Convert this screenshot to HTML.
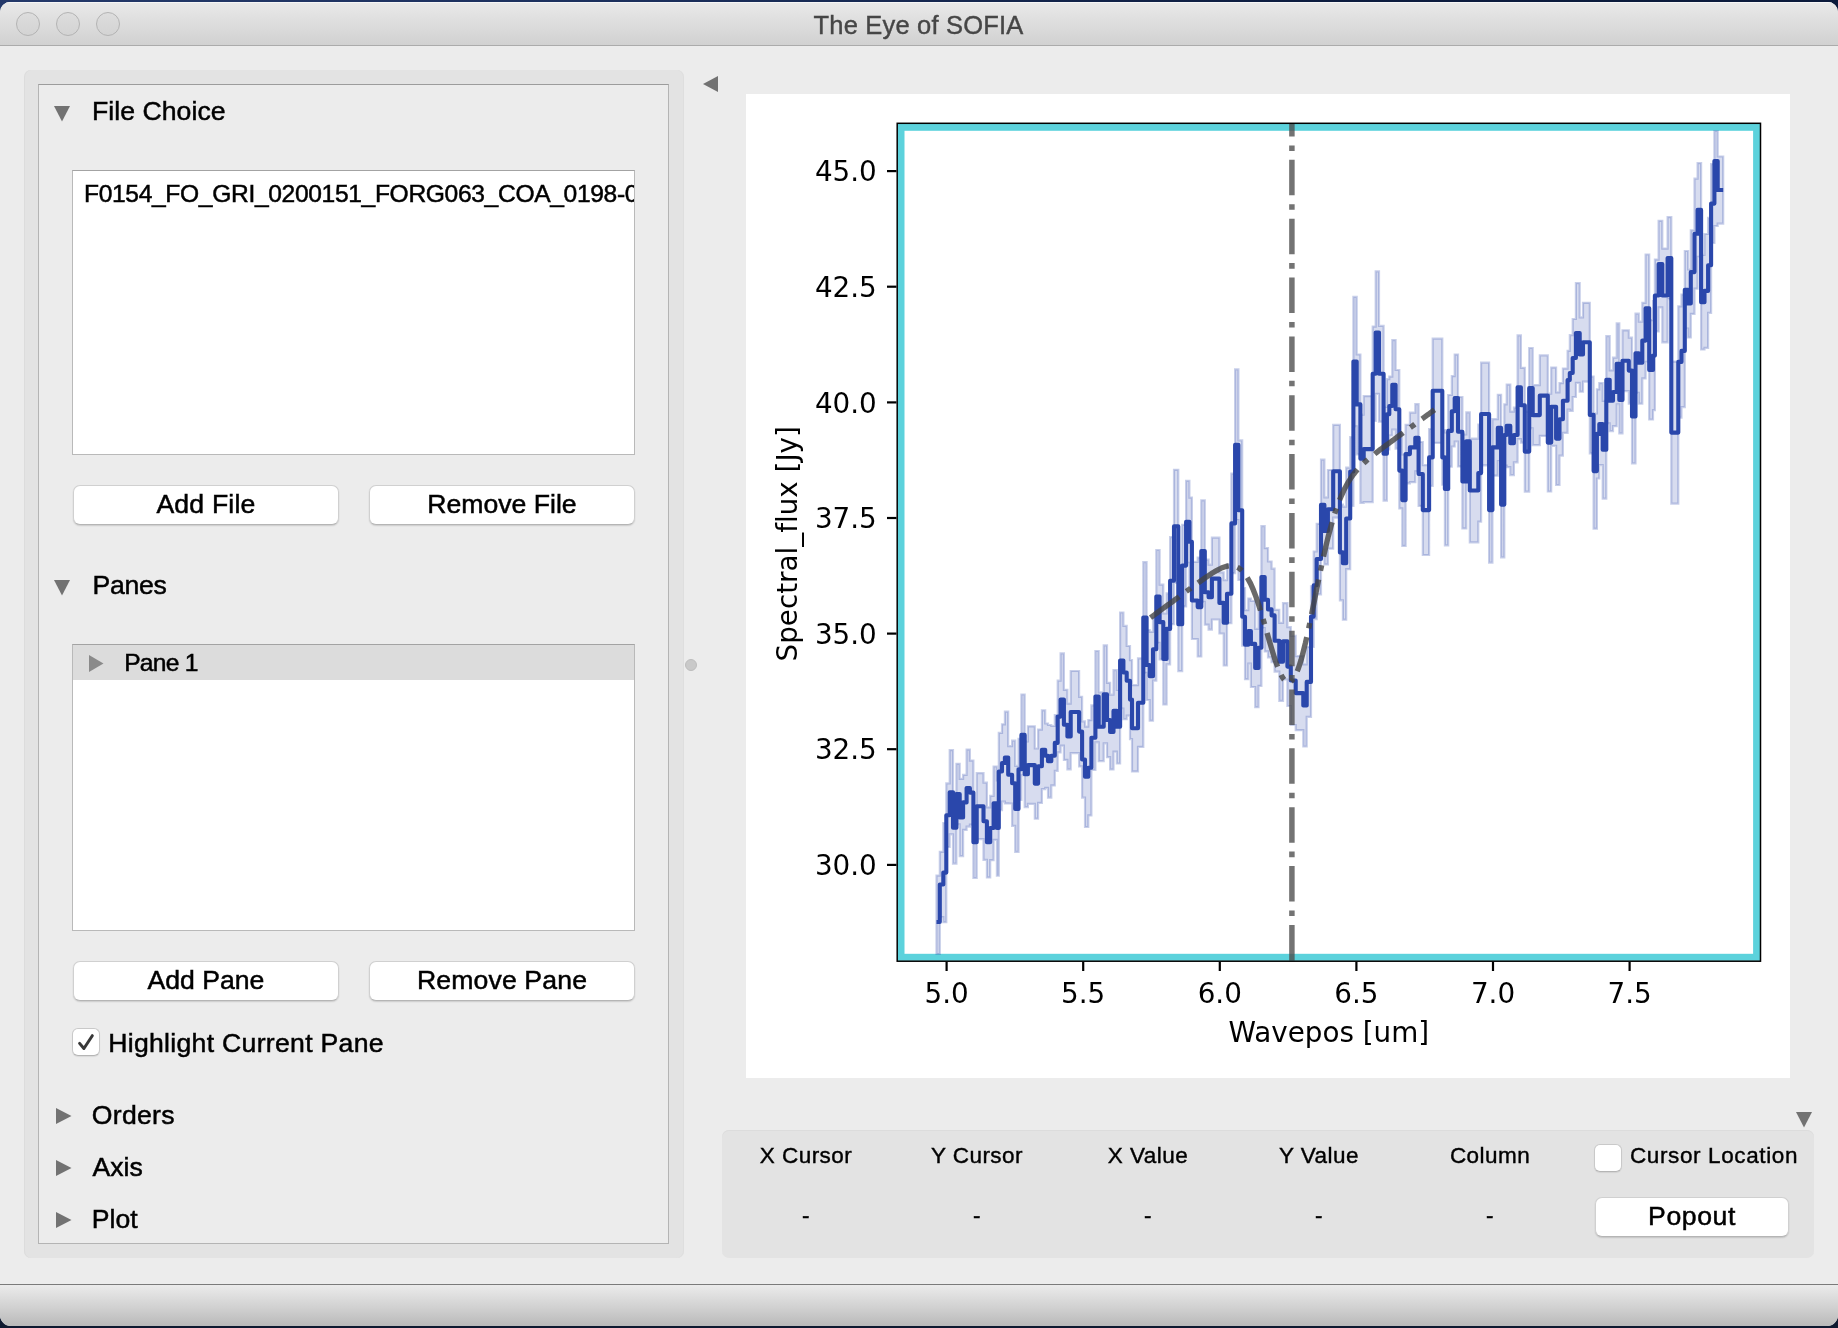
<!DOCTYPE html>
<html lang="en">
<head>
<meta charset="utf-8">
<title>The Eye of SOFIA</title>
<style>
html,body{margin:0;padding:0;}
body{width:1838px;height:1328px;overflow:hidden;position:relative;
  background:linear-gradient(90deg,#24396a 0%,#1b2f5c 35%,#0d1d40 70%,#0b1a3b 100%);
  font-family:"Liberation Sans",sans-serif;color:#000;}
.abs{position:absolute;}
#win{will-change:transform;position:absolute;left:0;top:2px;width:1838px;height:1324px;background:#ececec;border-radius:10px 10px 11px 11px;overflow:hidden;}
#botdark{position:absolute;left:0;top:1318px;width:1838px;height:10px;background:#0e1930;}
#titlebar{position:absolute;left:0;top:0;width:1838px;height:43px;background:linear-gradient(#e9e9e9,#d1d1d1);border-bottom:1px solid #ababab;box-shadow:inset 0 1px 0 #f6f6f6;}
#title{position:absolute;left:-0.5px;width:1838px;top:8px;text-align:center;font-size:25.5px;line-height:30px;color:#464646;letter-spacing:0.18px;-webkit-text-stroke:0.4px #464646;}
.tl{position:absolute;top:10px;width:22px;height:22px;border-radius:50%;background:linear-gradient(#dddddd,#d3d3d3);border:1px solid #b3b3b3;}
#status{position:absolute;left:0;top:1282px;width:1838px;height:42px;background:linear-gradient(#ebebeb,#d0d0d0 55%,#b8b8b8);border-top:1px solid #7a7a7a;}
#lgroup{position:absolute;left:24px;top:68px;width:660px;height:1188px;background:#e3e3e3;border-radius:7px;box-shadow:inset 1px 0 0 #dcdcdc, inset -1px 0 0 #dedede;}
#lframe{position:absolute;left:38px;top:82px;width:629px;height:1158px;background:#ececec;border:1px solid #b4b4b4;border-top-color:#9c9c9c;}
.t26{position:absolute;font-size:26.6px;line-height:30px;white-space:nowrap;-webkit-text-stroke:0.5px #000;}
.t22{position:absolute;font-size:22.5px;line-height:26px;white-space:nowrap;letter-spacing:0.45px;-webkit-text-stroke:0.4px #000;}
.list{position:absolute;background:#fff;border:1px solid #b9b9b9;border-top-color:#a3a3a3;overflow:hidden;}
.btn{position:absolute;background:#fff;border-radius:7px;border:1px solid #d0d0d0;border-bottom-color:#b5b5b5;box-shadow:0 1px 1.5px rgba(0,0,0,0.14);font-size:26.6px;text-align:center;box-sizing:border-box;white-space:nowrap;-webkit-text-stroke:0.5px #000;}
.cb{position:absolute;background:#fff;border-radius:6px;border:1px solid #c9c9c9;border-bottom-color:#b5b5b5;box-sizing:border-box;box-shadow:0 1px 1px rgba(0,0,0,0.08);}
svg.ico{position:absolute;overflow:visible;}
svg.plot{position:absolute;left:746px;top:92px;}
svg.plot text{font-family:"DejaVu Sans",sans-serif;font-size:27.8px;fill:#000;font-variant-ligatures:none;font-feature-settings:"liga" 0,"clig" 0;}
#bgroup{position:absolute;left:722px;top:1128px;width:1092px;height:128px;background:#e3e3e3;border-radius:7px;box-shadow:inset 0 1px 0 #dcdcdc;}
.c{text-align:center;}
</style>
</head>
<body>
<div id="botdark"></div>
<div id="win">
  <div id="titlebar">
    <div class="tl" style="left:16px"></div>
    <div class="tl" style="left:56px"></div>
    <div class="tl" style="left:96px"></div>
    <div id="title">The Eye of SOFIA</div>
  </div>

  <!-- left control panel -->
  <div id="lgroup"></div>
  <div id="lframe"></div>

  <svg class="ico" style="left:54px;top:104px" width="16" height="16"><path d="M0 0H16L8 15.5Z" fill="#727272"/></svg>
  <div class="t26" id="t_file" style="left:92px;top:94px;letter-spacing:0.05px">File Choice</div>

  <div class="list" style="left:72px;top:168px;width:561px;height:283px">
    <div class="t26" id="t_fname" style="left:11px;top:8px;font-size:24.6px;letter-spacing:-0.34px">F0154_FO_GRI_0200151_FORG063_COA_0198-0</div>
  </div>
  <div class="btn" id="b_addfile" style="letter-spacing:0.2px;left:73px;top:483px;width:266px;height:40px;line-height:37px">Add File</div>
  <div class="btn" id="b_rmfile" style="left:369px;top:483px;width:266px;height:40px;line-height:37px">Remove File</div>

  <svg class="ico" style="left:54px;top:578px" width="16" height="16"><path d="M0 0H16L8 15.5Z" fill="#727272"/></svg>
  <div class="t26" id="t_panes" style="left:92.5px;top:568px;letter-spacing:-0.3px">Panes</div>

  <div class="list" style="left:72px;top:642px;width:561px;height:285px">
    <div class="abs" style="left:0;top:0;width:561px;height:35px;background:#dcdcdc"></div>
    <svg class="ico" style="left:16px;top:9.5px" width="16" height="17"><path d="M0 0V17L14.5 8.5Z" fill="#8a8a8a"/></svg>
    <div class="t26" id="t_pane1" style="left:51.2px;top:3px;font-size:24.6px;letter-spacing:-0.75px">Pane 1</div>
  </div>
  <div class="btn" id="b_addpane" style="left:73px;top:959px;width:266px;height:40px;line-height:37px">Add Pane</div>
  <div class="btn" id="b_rmpane" style="letter-spacing:0.15px;left:369px;top:959px;width:266px;height:40px;line-height:37px">Remove Pane</div>

  <div class="cb" style="left:72px;top:1026px;width:28px;height:28px"></div>
  <svg class="ico" style="left:72px;top:1026px" width="28" height="28"><path d="M7.6 15.4L11.9 20.5L20.3 7.7" fill="none" stroke="#383838" stroke-width="3" stroke-linecap="round" stroke-linejoin="round"/></svg>
  <div class="t26" id="t_hl" style="left:108.2px;top:1026px;letter-spacing:0.3px">Highlight Current Pane</div>

  <svg class="ico" style="left:56px;top:1106px" width="16" height="17"><path d="M0 0V16L15.5 8Z" fill="#727272"/></svg>
  <div class="t26" id="t_orders" style="left:91.8px;top:1098px;letter-spacing:0.3px">Orders</div>
  <svg class="ico" style="left:56px;top:1158px" width="16" height="17"><path d="M0 0V16L15.5 8Z" fill="#727272"/></svg>
  <div class="t26" id="t_axis" style="left:92.5px;top:1149.5px">Axis</div>
  <svg class="ico" style="left:56px;top:1210px" width="16" height="17"><path d="M0 0V16L15.5 8Z" fill="#727272"/></svg>
  <div class="t26" id="t_plot" style="left:91.8px;top:1201.6px">Plot</div>

  <!-- splitter -->
  <div class="abs" style="left:685px;top:656.5px;width:12px;height:12px;border-radius:50%;background:#c9c9c9;border:1px solid #bdbdbd;box-sizing:border-box"></div>
  <svg class="ico" style="left:703px;top:74px" width="15" height="16"><path d="M15 0V16L0 8Z" fill="#727272"/></svg>

  <svg class="plot" width="1044" height="984" viewBox="746 94 1044 984">
<rect x="746" y="94" width="1044" height="984" fill="#fff"/>
<clipPath id="ax"><rect x="897" y="123.3" width="863.6" height="838"/></clipPath>
<rect x="901" y="127.3" width="855.6" height="830" fill="none" stroke="#5cd2dc" stroke-width="7"/>
<g clip-path="url(#ax)">
<path d="M936.5 875.6H939.8V851.8H943.3V823.0H946.3V783.4H949.7V750.1H953.0V791.8H956.4V763.8H959.7V778.8H963.1V774.9H966.6V749.6H969.9V760.6H973.4V806.6H976.7V773.2H983.5V782.7H986.9V807.3H990.2V795.9H993.6V766.5H996.9V780.3H998.8V732.9H1002.0V724.3H1004.9V711.7H1008.2V746.2H1012.1V740.7H1015.2V765.9H1018.5V738.8H1021.4V694.5H1024.7V741.4H1027.9V726.3H1034.8V748.5H1038.1V729.6H1041.9V710.3H1045.2V723.5H1048.0V725.0H1051.3V726.0H1054.8V715.1H1057.7V680.7H1060.6V653.4H1063.9V689.8H1067.4V703.6H1070.7V671.0H1079.1V696.8H1082.1V721.4H1085.0V726.6H1088.3V720.1H1091.4V705.4H1095.4V651.0H1098.7V692.4H1103.7V645.4H1107.0V682.8H1110.1V694.7H1113.5V670.2H1116.8V690.0H1120.1V612.5H1123.4V625.9H1126.7V646.0H1130.0V660.1H1132.0V685.1H1138.0V658.4H1143.3V562.2H1146.6V630.0H1149.7V631.8H1153.0V617.8H1156.3V550.0H1159.6V584.7H1163.3V613.5H1166.6V593.4H1170.1V537.2H1174.0V469.8H1178.3V577.6H1182.2V524.8H1186.1V480.8H1189.4V497.6H1191.9V561.9H1197.7V557.6H1201.3V500.3H1204.8V559.7H1208.6V564.7H1211.9V537.7H1219.4V572.4H1223.7V580.2H1227.0V564.5H1231.4V473.7H1235.1V369.4H1238.4V440.4H1242.2V588.0H1245.0V610.1H1248.3V598.6H1250.9V600.9H1255.2V628.8H1258.5V609.4H1261.4V526.2H1264.7V548.1H1268.0V561.5H1271.6V568.7H1274.6V609.8H1279.3V622.8H1283.0V603.2H1287.4V627.2H1290.8V635.9H1295.7V656.1H1303.3V664.3H1306.7V647.1H1311.0V586.4H1313.7V551.5H1316.7V523.8H1321.0V459.7H1324.4V497.4H1327.9V470.0H1333.2V424.9H1339.9V504.6H1342.9V506.7H1346.2V467.7H1350.2V437.2H1353.4V296.9H1356.7V354.5H1360.4V414.7H1363.7V396.1H1372.7V326.6H1375.7V271.4H1379.0V325.9H1383.6V406.9H1386.9V379.2H1389.3V376.6H1392.3V340.1H1395.6V370.0H1399.3V432.9H1402.3V454.4H1405.6V424.8H1409.9V412.7H1415.3V404.2H1418.6V442.0H1422.8V465.2H1429.1V429.0H1432.7V338.7H1442.3V430.0H1444.9V432.5H1448.2V395.0H1451.8V376.1H1454.7V354.6H1458.0V397.0H1462.4V434.4H1466.3V412.4H1469.8V438.7H1478.3V424.5H1481.1V362.7H1489.1V457.5H1492.4V419.2H1497.8V394.8H1501.1V451.9H1504.3V404.3H1506.7V384.6H1510.3V411.6H1513.9V407.7H1517.6V335.4H1520.9V367.8H1524.8V411.6H1529.2V348.0H1532.7V385.2H1539.8V355.4H1547.8V393.7H1551.2V367.6H1556.1V392.3H1559.5V383.1H1562.9V368.6H1567.6V350.8H1569.8V335.2H1572.7V319.0H1575.9V283.1H1579.7V317.4H1583.0V302.8H1589.8V376.6H1593.6V413.4H1596.9V389.3H1599.3V383.1H1602.7V400.8H1606.3V336.2H1609.7V370.3H1613.0V357.7H1616.7V323.4H1619.3V366.5H1622.5V330.3H1628.8V337.7H1632.0V369.7H1635.5V313.7H1638.8V321.7H1642.3V302.8H1645.6V254.5H1649.2V320.2H1653.0V301.0H1654.9V259.6H1658.6V220.8H1662.3V248.6H1667.6V217.1H1671.3V361.6H1678.3V306.3H1681.5V294.6H1684.8V251.0H1688.1V269.4H1690.8V230.3H1694.5V178.7H1697.6V163.1H1701.1V254.9H1704.5V234.0H1708.1V217.9H1711.1V164.2H1714.4V131.0H1717.7V156.5H1723.2V223.6H1717.7V226.0H1714.4V243.0H1711.1V312.8H1708.1V347.8H1704.5V349.5H1701.1V256.8H1697.6V288.7H1694.5V313.9H1690.8V337.5H1688.1V328.5H1684.8V407.1H1681.5V417.6H1678.3V503.6H1671.3V299.1H1667.6V342.3H1662.3V307.4H1658.6V331.4H1654.9V410.2H1653.0V419.5H1649.2V361.8H1645.6V378.4H1642.3V403.7H1638.8V392.8H1635.5V463.3H1632.0V403.6H1628.8V391.1H1622.5V433.3H1619.3V404.3H1616.7V426.2H1613.0V431.1H1609.7V423.4H1606.3V498.6H1602.7V465.1H1599.3V478.5H1596.9V528.7H1593.6V453.3H1589.8V381.6H1583.0V391.7H1579.7V382.9H1575.9V397.0H1572.7V410.8H1569.8V409.5H1567.6V432.8H1562.9V455.6H1559.5V485.0H1556.1V445.8H1551.2V491.5H1547.8V435.9H1539.8V445.1H1532.7V428.3H1529.2V491.6H1524.8V442.6H1520.9V439.2H1517.6V462.3H1513.9V475.1H1510.3V467.2H1506.7V465.7H1504.3V557.3H1501.1V461.0H1497.8V475.7H1492.4V562.6H1489.1V465.3H1481.1V521.7H1478.3V542.3H1469.8V469.9H1466.3V528.4H1462.4V466.4H1458.0V441.5H1454.7V446.5H1451.8V466.7H1448.2V545.3H1444.9V484.7H1442.3V442.9H1432.7V485.8H1429.1V555.0H1422.8V505.9H1418.6V471.4H1415.3V482.2H1409.9V483.3H1405.6V545.9H1402.3V508.4H1399.3V448.6H1395.6V429.6H1392.3V435.5H1389.3V449.4H1386.9V500.6H1383.6V421.6H1379.0V393.9H1375.7V420.8H1372.7V502.1H1363.7V502.8H1360.4V454.3H1356.7V426.4H1353.4V505.8H1350.2V569.2H1346.2V619.7H1342.9V600.3H1339.9V517.6H1333.2V548.7H1327.9V564.4H1324.4V549.7H1321.0V594.3H1316.7V619.1H1313.7V646.9H1311.0V716.8H1306.7V746.5H1303.3V730.2H1295.7V725.0H1290.8V706.0H1287.4V679.5H1283.0V700.8H1279.3V671.6H1274.6V662.1H1271.6V657.3H1268.0V651.4H1264.7V628.0H1261.4V685.9H1258.5V707.2H1255.2V687.0H1250.9V663.6H1248.3V679.2H1245.0V645.6H1242.2V579.9H1238.4V520.0H1235.1V573.2H1231.4V623.2H1227.0V665.5H1223.7V633.5H1219.4V619.5H1211.9V629.6H1208.6V624.7H1204.8V601.9H1201.3V656.5H1197.7V639.0H1191.9V585.7H1189.4V562.8H1186.1V606.4H1182.2V671.1H1178.3V582.8H1174.0V624.2H1170.1V664.3H1166.6V704.5H1163.3V659.4H1159.6V642.9H1156.3V680.6H1153.0V720.7H1149.7V700.0H1146.6V672.9H1143.3V746.9H1138.0V771.4H1132.0V739.1H1130.0V715.6H1126.7V719.2H1123.4V708.5H1120.1V763.5H1116.8V751.7H1113.5V769.4H1110.1V757.2H1107.0V743.3H1103.7V761.1H1098.7V742.3H1095.4V769.9H1091.4V815.4H1088.3V827.0H1085.0V797.6H1082.1V766.4H1079.1V753.1H1070.7V769.3H1067.4V759.9H1063.9V745.7H1060.6V752.4H1057.7V770.8H1054.8V785.4H1051.3V797.6H1048.0V787.9H1045.2V789.1H1041.9V802.9H1038.1V818.7H1034.8V803.8H1027.9V807.1H1024.7V775.4H1021.4V799.8H1018.5V851.8H1015.2V825.8H1012.1V803.5H1008.2V803.4H1004.9V801.6H1002.0V810.1H998.8V875.7H996.9V839.9H993.6V860.2H990.2V877.4H986.9V859.8H983.5V839.1H976.7V878.0H973.4V824.7H969.9V826.6H966.6V829.9H963.1V856.1H959.7V824.4H956.4V863.6H953.0V834.3H949.7V847.0H946.3V922.2H943.3V917.2H939.8V954.0H936.5Z" fill="rgba(42,71,171,0.19)" stroke="rgba(42,71,171,0.26)" stroke-width="2.2" stroke-linejoin="miter"/>
<path d="M936.5 922.0H939.8V884.5H943.3V872.6H946.3V815.2H949.7V792.2H953.0V827.7H956.4V794.1H959.7V817.5H963.1V802.4H966.6V788.1H969.9V792.6H973.4V842.3H976.7V806.2H983.5V821.2H986.9V842.3H990.2V828.0H993.6V803.2H996.9V828.0H998.8V771.5H1002.0V763.0H1004.9V757.5H1008.2V774.8H1012.1V783.3H1015.2V808.9H1018.5V769.3H1021.4V734.9H1024.7V774.2H1027.9V765.1H1034.8V783.6H1038.1V766.3H1041.9V749.7H1045.2V755.7H1048.0V761.3H1051.3V755.7H1054.8V742.9H1057.7V716.6H1060.6V699.5H1063.9V724.8H1067.4V736.4H1070.7V712.0H1079.1V731.6H1082.1V759.5H1085.0V776.8H1088.3V767.8H1091.4V737.7H1095.4V696.6H1098.7V726.7H1103.7V694.4H1107.0V720.0H1110.1V732.0H1113.5V710.9H1116.8V726.7H1120.1V660.5H1123.4V672.5H1126.7V680.8H1130.0V699.6H1132.0V728.3H1138.0V702.7H1143.3V617.6H1146.6V665.0H1149.7V676.3H1153.0V649.2H1156.3V596.5H1159.6V622.1H1163.3V659.0H1166.6V628.9H1170.1V580.7H1174.0V526.3H1178.3V624.3H1182.2V565.6H1186.1V521.8H1189.4V541.7H1191.9V600.5H1197.7V607.1H1201.3V551.1H1204.8V592.2H1208.6V597.2H1211.9V578.6H1219.4V602.9H1223.7V622.8H1227.0V593.8H1231.4V523.4H1235.1V444.7H1238.4V510.2H1242.2V616.8H1245.0V644.7H1248.3V631.1H1250.9V643.9H1255.2V668.0H1258.5V647.7H1261.4V577.1H1264.7V599.8H1268.0V609.4H1271.6V615.4H1274.6V640.7H1279.3V661.8H1283.0V641.3H1287.4V666.6H1290.8V680.5H1295.7V693.1H1303.3V705.4H1306.7V681.9H1311.0V616.6H1313.7V585.3H1316.7V559.0H1321.0V504.7H1324.4V530.9H1327.9V509.3H1333.2V471.2H1339.9V552.4H1342.9V563.2H1346.2V518.5H1350.2V471.5H1353.4V361.6H1356.7V404.4H1360.4V458.7H1363.7V449.1H1372.7V373.7H1375.7V332.6H1379.0V373.7H1383.6V453.7H1386.9V414.3H1389.3V406.0H1392.3V384.8H1395.6V409.3H1399.3V470.6H1402.3V500.1H1405.6V454.1H1409.9V447.4H1415.3V437.8H1418.6V474.0H1422.8V510.1H1429.1V457.4H1432.7V390.8H1442.3V457.4H1444.9V488.9H1448.2V430.9H1451.8V411.3H1454.7V398.1H1458.0V431.7H1462.4V481.4H1466.3V441.2H1469.8V490.5H1478.3V473.1H1481.1V414.0H1489.1V510.1H1492.4V447.4H1497.8V427.9H1501.1V504.6H1504.3V435.0H1506.7V425.9H1510.3V443.3H1513.9V435.0H1517.6V387.3H1520.9V405.2H1524.8V451.6H1529.2V388.1H1532.7V415.1H1539.8V395.6H1547.8V442.6H1551.2V406.7H1556.1V438.6H1559.5V419.3H1562.9V400.7H1567.6V380.1H1569.8V373.0H1572.7V358.0H1575.9V333.0H1579.7V354.5H1583.0V342.2H1589.8V414.9H1593.6V471.1H1596.9V433.9H1599.3V424.1H1602.7V449.7H1606.3V379.8H1609.7V400.7H1613.0V392.0H1616.7V363.8H1619.3V399.9H1622.5V360.7H1628.8V370.6H1632.0V416.5H1635.5V353.3H1638.8V362.7H1642.3V340.6H1645.6V308.2H1649.2V369.9H1653.0V355.6H1654.9V295.5H1658.6V264.1H1662.3V295.5H1667.6V258.1H1671.3V432.6H1678.3V361.9H1681.5V350.9H1684.8V289.7H1688.1V303.4H1690.8V272.1H1694.5V233.7H1697.6V209.9H1701.1V302.2H1704.5V290.9H1708.1V265.3H1711.1V203.6H1714.4V161.0H1717.7V190.0H1723.2" fill="none" stroke="#2a47ab" stroke-width="4.1" stroke-linejoin="round" stroke-linecap="butt"/>
<path d="M1150.5 617.6L1151.9 616.6L1153.3 615.6L1154.7 614.6L1156.1 613.5L1157.5 612.5L1158.9 611.5L1160.3 610.4L1161.7 609.4L1163.1 608.4L1164.5 607.4L1166.0 606.3L1167.4 605.3L1168.8 604.3L1170.2 603.2L1171.6 602.2L1173.0 601.2L1174.4 600.2L1175.8 599.1L1177.2 598.1L1178.6 597.1L1180.0 596.0L1181.4 595.0L1182.8 594.0L1184.2 593.0L1185.6 591.9L1187.0 590.9L1188.4 589.9L1189.8 588.9L1191.2 587.8L1192.7 586.8L1194.1 585.8L1195.5 584.8L1196.9 583.8L1198.3 582.8L1199.7 581.8L1201.1 580.8L1202.5 579.8L1203.9 578.8L1205.3 577.8L1206.7 576.8L1208.1 575.9L1209.5 574.9L1210.9 574.0L1212.3 573.1L1213.7 572.2L1215.1 571.4L1216.5 570.6L1217.9 569.8L1219.3 569.1L1220.8 568.4L1222.2 567.7L1223.6 567.2L1225.0 566.7L1226.4 566.3L1227.8 566.0L1229.2 565.8L1230.6 565.7L1232.0 565.7L1233.4 565.9L1234.8 566.2L1236.2 566.7L1237.6 567.4L1239.0 568.2L1240.4 569.3L1241.8 570.5L1243.2 572.0L1244.6 573.7L1246.0 575.7L1247.4 577.9L1248.8 580.4L1250.3 583.1L1251.7 586.1L1253.1 589.4L1254.5 592.9L1255.9 596.6L1257.3 600.6L1258.7 604.8L1260.1 609.1L1261.5 613.7L1262.9 618.4L1264.3 623.2L1265.7 628.1L1267.1 633.0L1268.5 637.9L1269.9 642.8L1271.3 647.6L1272.7 652.3L1274.1 656.8L1275.5 661.1L1277.0 665.1L1278.4 668.8L1279.8 672.1L1281.2 675.0L1282.6 677.5L1284.0 679.5L1285.4 681.0L1286.8 681.9L1288.2 682.3L1289.6 682.2L1291.0 681.4" fill="none" stroke="rgba(67,67,67,0.8)" stroke-width="5.4" stroke-dasharray="35.5 8.9 5.55 8.9"/>
<path d="M1291.0 681.4L1292.4 680.1L1293.9 678.1L1295.3 675.6L1296.7 672.4L1298.2 668.8L1299.6 664.6L1301.1 659.9L1302.5 654.7L1303.9 649.1L1305.4 643.2L1306.8 636.9L1308.2 630.4L1309.7 623.7L1311.1 616.7L1312.5 609.7L1314.0 602.6L1315.4 595.4L1316.8 588.3L1318.3 581.2L1319.7 574.3L1321.2 567.4L1322.6 560.7L1324.0 554.3L1325.5 548.0L1326.9 542.0L1328.3 536.2L1329.8 530.7L1331.2 525.4L1332.6 520.4L1334.1 515.7L1335.5 511.2L1337.0 507.0L1338.4 503.1L1339.8 499.4L1341.3 496.0L1342.7 492.8L1344.1 489.7L1345.6 486.9L1347.0 484.3L1348.4 481.9L1349.9 479.6L1351.3 477.4L1352.7 475.4L1354.2 473.5L1355.6 471.7L1357.1 470.0L1358.5 468.4L1359.9 466.9L1361.4 465.5L1362.8 464.1L1364.2 462.7L1365.7 461.4L1367.1 460.1L1368.5 458.9L1370.0 457.7L1371.4 456.5L1372.9 455.4L1374.3 454.3L1375.7 453.1L1377.2 452.0L1378.6 450.9L1380.0 449.8L1381.5 448.8L1382.9 447.7L1384.3 446.6L1385.8 445.5L1387.2 444.5L1388.6 443.4L1390.1 442.4L1391.5 441.3L1393.0 440.2L1394.4 439.2L1395.8 438.1L1397.3 437.1L1398.7 436.0L1400.1 435.0L1401.6 433.9L1403.0 432.9L1404.4 431.8L1405.9 430.8L1407.3 429.7L1408.8 428.7L1410.2 427.6L1411.6 426.6L1413.1 425.5L1414.5 424.5L1415.9 423.4L1417.4 422.4L1418.8 421.3L1420.2 420.3L1421.7 419.2L1423.1 418.2L1424.5 417.1L1426.0 416.1L1427.4 415.0L1428.9 414.0L1430.3 412.9L1431.7 411.9L1433.2 410.8L1434.6 409.8" fill="none" stroke="rgba(67,67,67,0.8)" stroke-width="5.4" stroke-dasharray="35.5 8.9 5.55 8.9" stroke-dashoffset="46.79"/>
<path d="M1291.9 960.4V123" fill="none" stroke="rgba(75,75,75,0.78)" stroke-width="5.5" stroke-dasharray="35.5 8.9 5.55 8.9"/>
</g>
<rect x="897.2" y="123.3" width="863.3" height="837.9" fill="none" stroke="#000" stroke-width="1.5"/>
<path d="M946.6 962V971" stroke="#000" stroke-width="2.2"/>
<text x="946.6" y="1002.7" text-anchor="middle">5.0</text>
<path d="M1083.2 962V971" stroke="#000" stroke-width="2.2"/>
<text x="1083.2" y="1002.7" text-anchor="middle">5.5</text>
<path d="M1219.8 962V971" stroke="#000" stroke-width="2.2"/>
<text x="1219.8" y="1002.7" text-anchor="middle">6.0</text>
<path d="M1356.4 962V971" stroke="#000" stroke-width="2.2"/>
<text x="1356.4" y="1002.7" text-anchor="middle">6.5</text>
<path d="M1493.0 962V971" stroke="#000" stroke-width="2.2"/>
<text x="1493.0" y="1002.7" text-anchor="middle">7.0</text>
<path d="M1629.6 962V971" stroke="#000" stroke-width="2.2"/>
<text x="1629.6" y="1002.7" text-anchor="middle">7.5</text>
<path d="M887 171.1H896.5" stroke="#000" stroke-width="2.2"/>
<text x="876.8" y="181.3" text-anchor="end">45.0</text>
<path d="M887 286.7H896.5" stroke="#000" stroke-width="2.2"/>
<text x="876.8" y="296.9" text-anchor="end">42.5</text>
<path d="M887 402.4H896.5" stroke="#000" stroke-width="2.2"/>
<text x="876.8" y="412.6" text-anchor="end">40.0</text>
<path d="M887 518.0H896.5" stroke="#000" stroke-width="2.2"/>
<text x="876.8" y="528.2" text-anchor="end">37.5</text>
<path d="M887 633.6H896.5" stroke="#000" stroke-width="2.2"/>
<text x="876.8" y="643.8" text-anchor="end">35.0</text>
<path d="M887 749.2H896.5" stroke="#000" stroke-width="2.2"/>
<text x="876.8" y="759.4" text-anchor="end">32.5</text>
<path d="M887 864.9H896.5" stroke="#000" stroke-width="2.2"/>
<text x="876.8" y="875.1" text-anchor="end">30.0</text>
<text x="1328.8" y="1041.6" text-anchor="middle">Wavepos [um]</text>
<text transform="translate(796.9 543.8) rotate(-90)" text-anchor="middle">Spectral_flux [Jy]</text>
</svg>

  <!-- cursor panel -->
  <svg class="ico" style="left:1796px;top:1110px" width="16" height="16"><path d="M0 0H16L8 15.5Z" fill="#727272"/></svg>
  <div id="bgroup"></div>
  <div class="t22 c" style="left:726px;width:160px;top:1140.5px">X Cursor</div>
  <div class="t22 c" style="left:897px;width:160px;top:1140.5px">Y Cursor</div>
  <div class="t22 c" style="left:1068px;width:160px;top:1140.5px">X Value</div>
  <div class="t22 c" style="left:1239px;width:160px;top:1140.5px">Y Value</div>
  <div class="t22 c" style="left:1410px;width:160px;top:1140.5px">Column</div>
  <div class="t22 c" style="left:726px;width:160px;top:1201px">-</div>
  <div class="t22 c" style="left:897px;width:160px;top:1201px">-</div>
  <div class="t22 c" style="left:1068px;width:160px;top:1201px">-</div>
  <div class="t22 c" style="left:1239px;width:160px;top:1201px">-</div>
  <div class="t22 c" style="left:1410px;width:160px;top:1201px">-</div>
  <div class="cb" style="left:1594px;top:1142px;width:28px;height:28px"></div>
  <div class="t22" id="t_cl" style="left:1630px;top:1141px;letter-spacing:0.62px">Cursor Location</div>
  <div class="btn" id="b_pop" style="letter-spacing:0.6px;left:1595px;top:1195px;width:194px;height:40px;line-height:37px">Popout</div>

  <div id="status"></div>
</div>
</body>
</html>
